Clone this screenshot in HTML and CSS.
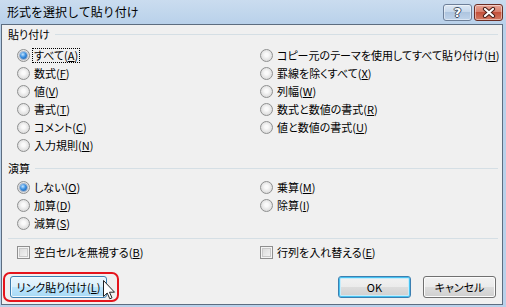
FILE: index.html
```html
<!DOCTYPE html>
<html lang="ja">
<head>
    <meta charset="UTF-8">
    <title>形式を選択して貼り付け</title>
    <link rel="stylesheet" href="styles.css">
</head>
<body>
    <div class="window">
        <div class="titlebar">
            <span class="title">形式を選択して貼り付け</span>
            <div class="caption-btns">
                <span class="cap-btn help">?</span>
                <span class="cap-btn close">
                    <svg width="14" height="11" viewBox="0 0 14 11">
                        <path d="M3 2 L11 9 M11 2 L3 9" stroke="#4a1f18" stroke-width="4.2" stroke-linecap="round"/>
                        <path d="M3 2 L11 9 M11 2 L3 9" stroke="#ffffff" stroke-width="2.2" stroke-linecap="round"/>
                    </svg>
                </span>
            </div>
        </div>

        <div class="client">
            <div class="group-head"><span>貼り付け</span><span class="rule"></span></div>
            <div class="options paste">
                <div class="col">
                    <label class="opt"><span class="radio checked"></span><span class="focus">すべて(<u>A</u>)</span></label>
                    <label class="opt"><span class="radio"></span>数式(<u>F</u>)</label>
                    <label class="opt"><span class="radio"></span>値(<u>V</u>)</label>
                    <label class="opt"><span class="radio"></span>書式(<u>T</u>)</label>
                    <label class="opt"><span class="radio"></span>コメント(<u>C</u>)</label>
                    <label class="opt"><span class="radio"></span>入力規則(<u>N</u>)</label>
                </div>
                <div class="col">
                    <label class="opt"><span class="radio"></span>コピー元のテーマを使用してすべて貼り付け(<u>H</u>)</label>
                    <label class="opt"><span class="radio"></span>罫線を除くすべて(<u>X</u>)</label>
                    <label class="opt"><span class="radio"></span>列幅(<u>W</u>)</label>
                    <label class="opt"><span class="radio"></span>数式と数値の書式(<u>R</u>)</label>
                    <label class="opt"><span class="radio"></span>値と数値の書式(<u>U</u>)</label>
                </div>
            </div>

            <div class="group-head calc-head"><span>演算</span><span class="rule"></span></div>
            <div class="options calc">
                <div class="col">
                    <label class="opt"><span class="radio checked"></span>しない(<u>O</u>)</label>
                    <label class="opt"><span class="radio"></span>加算(<u>D</u>)</label>
                    <label class="opt"><span class="radio"></span>減算(<u>S</u>)</label>
                </div>
                <div class="col">
                    <label class="opt"><span class="radio"></span>乗算(<u>M</u>)</label>
                    <label class="opt"><span class="radio"></span>除算(<u>I</u>)</label>
                </div>
            </div>

            <div class="separator"></div>

            <div class="options checks">
                <label class="opt"><span class="checkbox"></span>空白セルを無視する(<u>B</u>)</label>
                <label class="opt"><span class="checkbox"></span>行列を入れ替える(<u>E</u>)</label>
            </div>

            <div class="buttons">
                <div class="link-wrap">
                    <button type="button" class="btn btn-link">リンク貼り付け(<u>L</u>)</button>
                    <span class="highlight"></span>
                    <svg class="cursor" width="13" height="20" viewBox="0 0 13 20">
                        <path d="M0.5 0.5 L0.5 16.5 L4.2 13 L6.8 18.8 L9 17.8 L6.5 12.2 L11.5 12.2 Z" fill="#ffffff" stroke="#222222" stroke-width="1" stroke-linejoin="round"/>
                    </svg>
                </div>
                <span class="spacer"></span>
                <button type="button" class="btn btn-ok">OK</button>
                <button type="button" class="btn btn-cancel">キャンセル</button>
            </div>
        </div>
    </div>
</body>
</html>
```

FILE: styles.css
```css
* {
    margin: 0;
    padding: 0;
    box-sizing: border-box;
}

body {
    font-family: "Noto Sans CJK JP", "Noto Sans", sans-serif;
    font-size: 12px;
    color: #000000;
    background: #ffffff;
}

.window {
    width: 506px;
    height: 307px;
    display: flex;
    flex-direction: column;
    background: linear-gradient(#cadcef, #b9d1ea 24px, #b9d1ea);
    padding: 0 3px 2px 1px;
}

.titlebar {
    height: 24px;
    display: flex;
    align-items: center;
    justify-content: space-between;
    padding-left: 6px;
}

.title {
    font-size: 12px;
    line-height: 14px;
    color: #000000;
}

.caption-btns {
    display: flex;
    gap: 2px;
}

.cap-btn {
    width: 29px;
    height: 17px;
    border: 1px solid #6d7f98;
    border-radius: 3px;
    display: flex;
    align-items: center;
    justify-content: center;
    box-shadow: inset 0 0 0 1px rgba(255, 255, 255, 0.45);
}

.help {
    background: linear-gradient(#dde8f4, #c4d6ea 50%, #aec5df 50%, #bfd3ea);
    color: #ffffff;
    font-family: "DejaVu Sans", sans-serif;
    font-weight: bold;
    font-size: 13px;
    line-height: 13px;
    text-shadow: -1px 0 #3f4e62, 1px 0 #3f4e62, 0 -1px #3f4e62, 0 1px #3f4e62;
}

.close {
    background: linear-gradient(#e8a597, #d67b68 50%, #c4513b 50%, #d27a63);
    border-color: #6b2d24;
}

.client {
    flex: 1;
    background: #f0f0f0;
    border: 1px solid #5d6d80;
    padding: 2px 6px 0 6px;
    display: flex;
    flex-direction: column;
    font-size: 11px;
    font-feature-settings: "palt";
}

.group-head {
    display: flex;
    align-items: center;
    height: 14px;
    line-height: 14px;
}

.group-head .rule {
    flex: 1;
    height: 1px;
    background: #d5dfe5;
    margin: 1px -2px 0 5px;
}

.calc-head {
    margin-top: 7px;
}

.options {
    display: grid;
    grid-template-columns: 243px 1fr;
    padding-left: 9px;
}

.paste {
    margin-top: 5px;
}

.calc {
    margin-top: 3px;
}

.col {
    display: flex;
    flex-direction: column;
}

.opt {
    display: flex;
    align-items: center;
    height: 18px;
    line-height: 14px;
    white-space: nowrap;
}

u {
    text-decoration: underline;
    text-underline-offset: 1px;
}

.radio {
    width: 13px;
    height: 13px;
    flex: none;
    border-radius: 50%;
    border: 1px solid #8f9090;
    background: radial-gradient(circle at 50% 45%, #fafafa 20%, #e6e6e6 55%, #cfcfcf 100%);
    margin-right: 4px;
    position: relative;
}

.radio.checked::after {
    content: "";
    position: absolute;
    left: 2px;
    top: 2px;
    width: 7px;
    height: 7px;
    border-radius: 50%;
    background: radial-gradient(circle at 40% 35%, #c4e6ff 0%, #3b8fe0 45%, #1a56a0 100%);
    box-shadow: 0 0 0 1px rgba(30, 80, 150, 0.35);
}

.focus {
    outline: 1px dotted #000000;
    outline-offset: 0;
    padding: 0 1px;
    margin-left: -1px;
    line-height: 13px;
}

.separator {
    height: 1px;
    background: #d5dfe5;
    margin: 6px -2px 0 0;
}

.checks {
    margin-top: 4px;
}

.checkbox {
    width: 13px;
    height: 13px;
    flex: none;
    border: 1px solid #8f8f8f;
    background: linear-gradient(135deg, #d6d6d6, #f8f8f8);
    box-shadow: inset 0 0 0 1px #f4f4f4, inset 0 0 0 2px #c9c9c9;
    margin-right: 4px;
}

.buttons {
    display: flex;
    margin-top: 15px;
    padding-left: 2px;
}

.spacer {
    flex: 1;
}

.btn {
    height: 22px;
    border: 1px solid #707070;
    border-radius: 3px;
    background: linear-gradient(#f2f2f2, #ebebeb 50%, #dddddd 50%, #cfcfcf);
    box-shadow: inset 0 0 0 1px #fcfcfc;
    font-family: inherit;
    font-size: 11px;
    font-feature-settings: "palt";
    color: #000000;
    line-height: 14px;
    white-space: nowrap;
}

.link-wrap {
    position: relative;
}

.btn-link {
    width: 97px;
    border-color: #3c7fb1;
    background: linear-gradient(#eaf6fd, #d9f0fc 50%, #bee6fd 50%, #a7d9f5);
    box-shadow: inset 0 0 0 1px #f0f9fe;
}

.highlight {
    position: absolute;
    left: -7px;
    top: -4px;
    width: 116px;
    height: 30px;
    border: 2px solid #e5141c;
    border-radius: 7px;
}

.cursor {
    position: absolute;
    left: 93px;
    top: 4px;
}

.btn-ok {
    width: 73px;
    margin-right: 12px;
    border-color: #3c7fb1;
    box-shadow: inset 0 0 0 1px #48c3f1, inset 0 0 0 2px #c7ecfb;
}

.btn-cancel {
    width: 73px;
}
```
